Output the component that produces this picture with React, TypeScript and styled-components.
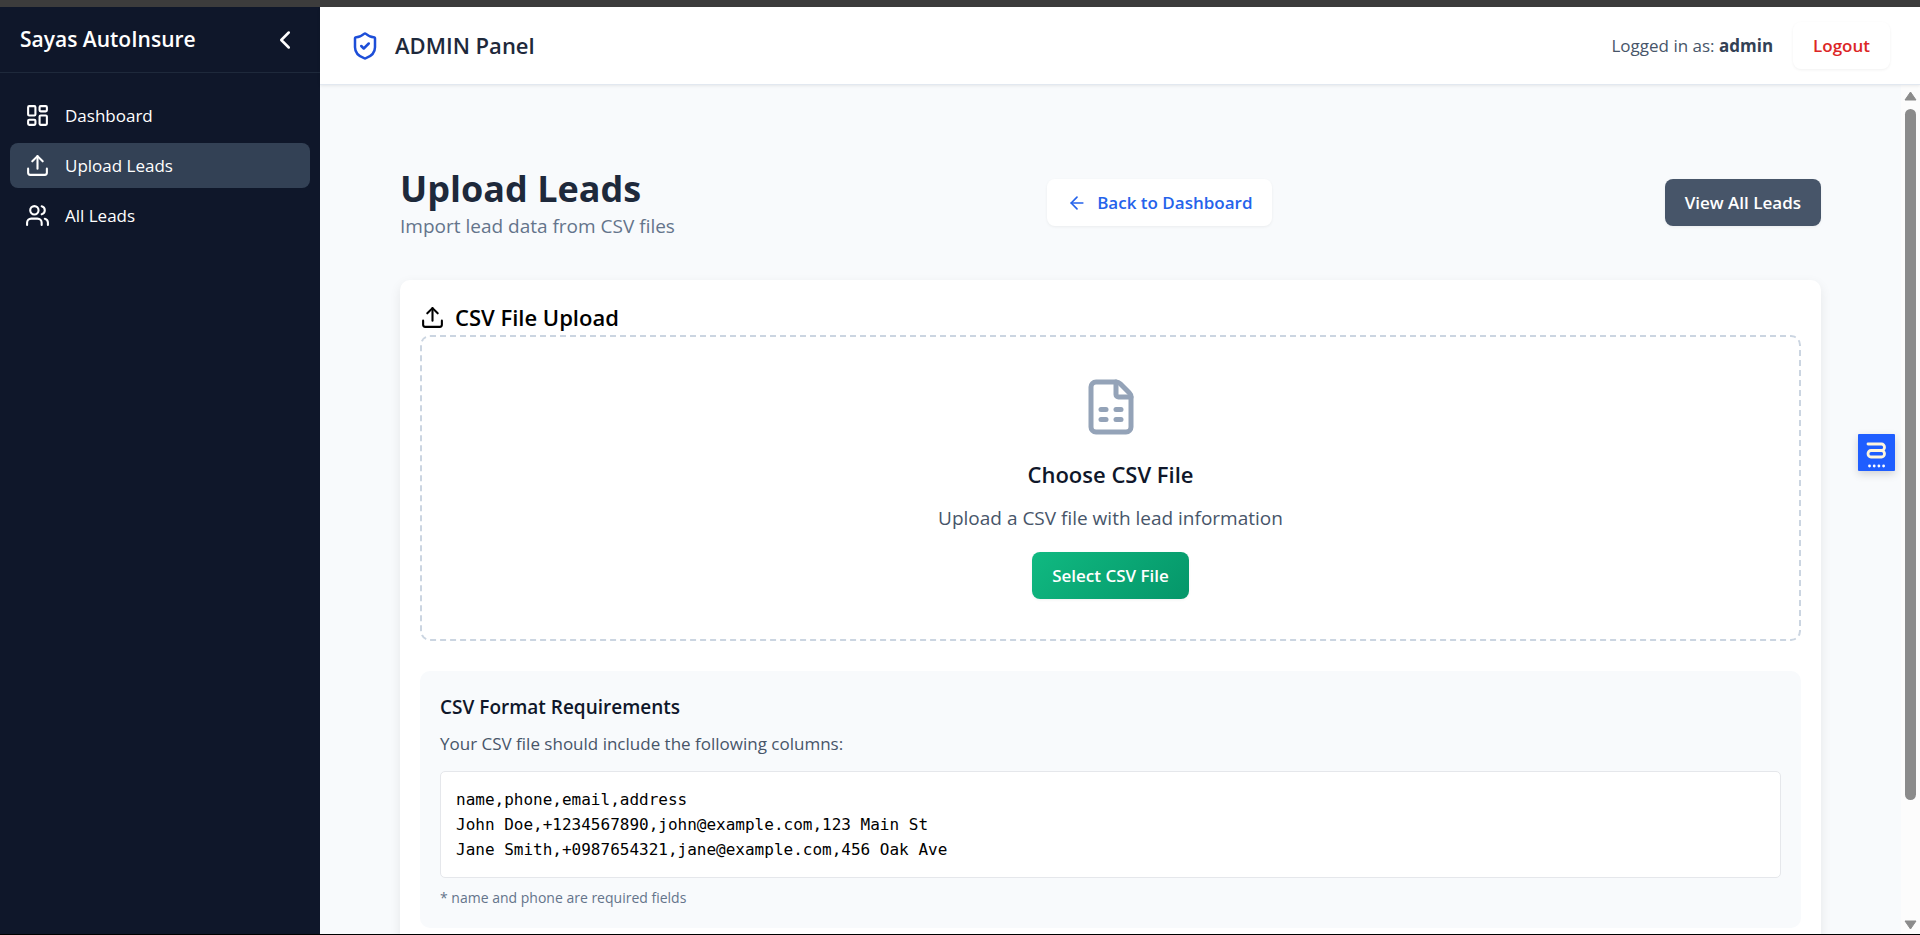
import React, { useState } from "react";
import styled, { createGlobalStyle, css } from "styled-components";
import {
  ArrowLeft,
  ChevronLeft,
  FileSpreadsheet,
  LayoutDashboard,
  ShieldCheck,
  Upload,
  Users,
} from "lucide-react";

const GlobalStyle = createGlobalStyle`
  *, *::before, *::after { box-sizing: border-box; }
  body {
    margin: 0;
    background: #f8fafc;
    color: #000;
    font-family: "Open Sans", "Noto Sans", sans-serif;
    font-size: 17px;
    line-height: 25px;
  }
  h1, h2, h3, h4, p, pre, ul { margin: 0; padding: 0; }
  button { font: inherit; cursor: pointer; }
`;

const Screen = styled.div`
  display: flex;
  flex-direction: column;
  height: 100vh;
  border-top: 7px solid #3c3c3c;
  border-bottom: 1px solid #000;
`;

const Shell = styled.div`
  display: flex;
  flex: 1;
  min-height: 0;
`;

const Sidebar = styled.aside`
  flex: 0 0 320px;
  background: #0f172a;
  color: #fff;
`;

const Brand = styled.div`
  display: flex;
  align-items: center;
  justify-content: space-between;
  padding: 15px 20px;
  border-bottom: 1px solid #1e293b;
  font-size: 21px;
  line-height: 35px;
  font-weight: 600;
`;

const CollapseButton = styled.button`
  display: flex;
  padding: 0;
  border: 0;
  background: none;
  color: inherit;
`;

const NavList = styled.ul`
  display: flex;
  flex-direction: column;
  gap: 5px;
  padding: 20px 10px;
  list-style: none;
`;

const NavLink = styled.a<{ $active?: boolean }>`
  display: flex;
  align-items: center;
  gap: 15px;
  padding: 10px 15px;
  border-radius: 8px;
  color: #fff;
  text-decoration: none;
  background: ${(p) => (p.$active ? "#334155" : "transparent")};
`;

const Workspace = styled.div`
  display: flex;
  flex: 1;
  flex-direction: column;
  min-width: 0;
`;

const TopBar = styled.header`
  display: flex;
  align-items: center;
  justify-content: space-between;
  padding: 15px 30px;
  background: #fff;
  border-bottom: 1px solid #e2e8f0;
  box-shadow: 0 1px 3px rgba(0, 0, 0, 0.08);
  z-index: 1;
`;

const PanelName = styled.div`
  display: flex;
  align-items: center;
  gap: 15px;
  color: #1e293b;
  font-size: 22px;
  font-weight: 600;

  svg { color: #1d4ed8; }
`;

const Session = styled.div`
  display: flex;
  align-items: center;
  gap: 20px;
  color: #475569;

  strong { color: #334155; font-weight: 700; }
`;

const tones = {
  danger: css`background: #fff; color: #dc2626;`,
  link: css`background: #fff; color: #2563eb; margin-right: 20px;`,
  slate: css`background: #475569; color: #fff;`,
  success: css`background: linear-gradient(135deg, #10b981, #059669); color: #fff;`,
};

const Button = styled.button<{ $tone: keyof typeof tones }>`
  display: inline-flex;
  align-items: center;
  gap: 10px;
  padding: 11px 20px;
  border: 0;
  border-radius: 8px;
  font-weight: 600;
  box-shadow: 0 1px 3px rgba(0, 0, 0, 0.06);
  ${(p) => tones[p.$tone]}
`;

const ScrollArea = styled.div`
  display: flex;
  flex: 1;
  min-height: 0;
`;

const Main = styled.main`
  flex: 1;
  min-width: 0;
  padding: 80px;
  overflow-y: auto;
  scrollbar-width: none;
`;

const PageHead = styled.div`
  display: flex;
  align-items: center;
  justify-content: space-between;
  margin-bottom: 40px;
`;

const PageTitle = styled.h1`
  color: #1e293b;
  font-size: 36px;
  line-height: 47px;
  font-weight: 700;
`;

const Lead = styled.p`
  color: #64748b;
  font-size: 19px;
  line-height: 28px;
`;

const Card = styled.section`
  padding: 20px;
  background: #fff;
  border-radius: 10px;
  box-shadow: 0 4px 12px rgba(0, 0, 0, 0.08);
`;

const CardTitle = styled.h2`
  display: flex;
  align-items: center;
  gap: 10px;
  font-size: 22px;
  line-height: 35px;
  font-weight: 600;
`;

const DropZone = styled.div`
  display: flex;
  flex-direction: column;
  align-items: center;
  padding: 40px;
  border: 2px dashed #cbd5e1;
  border-radius: 10px;

  svg { color: #94a3b8; }
`;

const DropTitle = styled.h3`
  margin: 20px 0 12px;
  color: #0f172a;
  font-size: 22px;
  line-height: 35px;
  font-weight: 600;
`;

const DropText = styled(Lead)`
  margin-bottom: 20px;
  color: #475569;
`;

const FormatBox = styled.div`
  margin-top: 30px;
  padding: 20px;
  background: #f8fafc;
  border-radius: 10px;
`;

const FormatTitle = styled.h4`
  margin-bottom: 8px;
  color: #0f172a;
  font-size: 19px;
  line-height: 32px;
  font-weight: 600;
`;

const FormatText = styled.p`
  margin-bottom: 15px;
  color: #475569;
`;

const Sample = styled.pre`
  padding: 15px;
  background: #fff;
  border: 1px solid #e5e7eb;
  border-radius: 5px;
  font-family: "DejaVu Sans Mono", "Liberation Mono", monospace;
  font-size: 16px;
`;

const Footnote = styled.p`
  margin-top: 10px;
  color: #64748b;
  font-size: 14px;
  line-height: 20px;
`;

const ScrollTrack = styled.div`
  display: flex;
  flex: 0 0 19px;
  flex-direction: column;
  align-items: center;
  gap: 8px;
  padding: 6px 0 4px;
  background: #fcfcfc;
`;

const ScrollLane = styled.div`
  flex: 1;
`;

const ScrollThumb = styled.div`
  width: 11px;
  height: 86%;
  border-radius: 6px;
  background: #8b8b8b;
`;

const WidgetButton = styled.button`
  position: fixed;
  top: 434px;
  right: 25px;
  display: flex;
  padding: 0;
  border: 0;
  border-radius: 1px;
  background: #1f5eff;
  box-shadow: 0 3px 8px rgba(0, 0, 0, 0.16);
`;

const navItems = [
  { label: "Dashboard", icon: LayoutDashboard },
  { label: "Upload Leads", icon: Upload },
  { label: "All Leads", icon: Users },
];

const sampleCsv = `name,phone,email,address
John Doe,+1234567890,john@example.com,123 Main St
Jane Smith,+0987654321,jane@example.com,456 Oak Ave`;

function ScrollArrow({ down }: { down?: boolean }) {
  return (
    <svg width="13" height="10" viewBox="0 0 13 10" aria-hidden="true">
      <path
        d={down ? "M1 1h11L6.500 9z" : "M1 9h11L6.500 1z"}
        fill="#8b8b8b"
        stroke="#8b8b8b"
        strokeWidth="1"
        strokeLinejoin="round"
      />
    </svg>
  );
}

function WidgetMark() {
  return (
    <svg width="37" height="37" viewBox="0 0 37 37" fill="none" aria-hidden="true">
      <path
        d="M10 10H23.500a3 3.250 0 0 1 0 6.500H13a3 3.250 0 0 0 0 6.500h10.500a3 3.250 0 0 0 0-6.500"
        stroke="#fff6dc"
        strokeWidth="2.800"
        strokeLinecap="round"
      />
      <g fill="#fff">
        <circle cx="11.500" cy="32" r="1.400" />
        <circle cx="16.200" cy="32" r="1.400" />
        <circle cx="20.900" cy="32" r="1.400" />
        <circle cx="25.600" cy="32" r="1.400" />
      </g>
    </svg>
  );
}

export default function App() {
  const [active, setActive] = useState("Upload Leads");

  return (
    <>
      <GlobalStyle />
      <Screen>
        <Shell>
          <Sidebar>
            <Brand>
              <span>Sayas AutoInsure</span>
              <CollapseButton type="button" aria-label="Collapse sidebar">
                <ChevronLeft size={30} />
              </CollapseButton>
            </Brand>
            <nav>
              <NavList>
                {navItems.map(({ label, icon: Icon }) => (
                  <li key={label}>
                    <NavLink href="#" $active={label === active} onClick={() => setActive(label)}>
                      <Icon size={25} />
                      {label}
                    </NavLink>
                  </li>
                ))}
              </NavList>
            </nav>
          </Sidebar>

          <Workspace>
            <TopBar>
              <PanelName>
                <ShieldCheck size={30} />
                <span>ADMIN Panel</span>
              </PanelName>
              <Session>
                <span>
                  Logged in as: <strong>admin</strong>
                </span>
                <Button type="button" $tone="danger">Logout</Button>
              </Session>
            </TopBar>

            <ScrollArea>
              <Main>
                <PageHead>
                  <div>
                    <PageTitle>Upload Leads</PageTitle>
                    <Lead>Import lead data from CSV files</Lead>
                  </div>
                  <Button type="button" $tone="link">
                    <ArrowLeft size={20} />
                    Back to Dashboard
                  </Button>
                  <Button type="button" $tone="slate">View All Leads</Button>
                </PageHead>

                <Card>
                  <CardTitle>
                    <Upload size={25} />
                    CSV File Upload
                  </CardTitle>
                  <DropZone>
                    <FileSpreadsheet size={60} />
                    <DropTitle>Choose CSV File</DropTitle>
                    <DropText>Upload a CSV file with lead information</DropText>
                    <Button type="button" $tone="success">Select CSV File</Button>
                  </DropZone>
                  <FormatBox>
                    <FormatTitle>CSV Format Requirements</FormatTitle>
                    <FormatText>Your CSV file should include the following columns:</FormatText>
                    <Sample>{sampleCsv}</Sample>
                    <Footnote>* name and phone are required fields</Footnote>
                  </FormatBox>
                </Card>
              </Main>
              <ScrollTrack aria-hidden="true">
                <ScrollArrow />
                <ScrollLane>
                  <ScrollThumb />
                </ScrollLane>
                <ScrollArrow down />
              </ScrollTrack>
            </ScrollArea>
          </Workspace>
        </Shell>
      </Screen>
      <WidgetButton type="button" aria-label="Open assistant">
        <WidgetMark />
      </WidgetButton>
    </>
  );
}
